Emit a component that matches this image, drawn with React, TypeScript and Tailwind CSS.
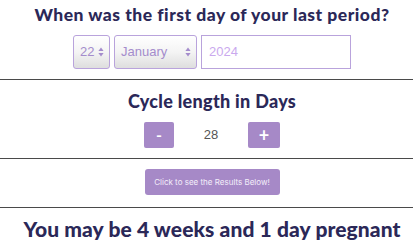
export default function App() {
  const heading = "font-['Lato',sans-serif] font-black text-[#2b2858] text-center";

  return (
    <div className="w-[413px] h-[240px] overflow-hidden bg-white">
      {/* last period */}
      <section className="h-[80px] border-b border-[#4a4a4a] flex flex-col items-center pl-[11px]">
        <h2 className={`${heading} text-[17.5px] leading-[22px] mt-[4px] tracking-[0.5px] whitespace-nowrap`}>
          When was the first day of your last period?
        </h2>
        <div className="flex gap-[4px] mt-[9px] font-['Liberation_Sans',sans-serif] text-[13px]">
          <div className="w-[37px] h-[34px] rounded-[3px] border border-[#b9a3dc] bg-gradient-to-b from-white via-[#f4f4f4] to-[#dedede] flex items-center justify-between pl-[6px] pr-[5px] text-[#a48ccc]">
            <span>22</span>
            <UpDown />
          </div>
          <div className="w-[83px] h-[34px] rounded-[3px] border border-[#b9a3dc] bg-gradient-to-b from-white via-[#f4f4f4] to-[#dedede] flex items-center justify-between pl-[6px] pr-[5px] text-[#a48ccc]">
            <span>January</span>
            <UpDown />
          </div>
          <div className="w-[150px] h-[34px] border border-[#b9a3dc] bg-white flex items-center pl-[7px] text-[#caa9ee]">
            2024
          </div>
        </div>
      </section>

      {/* cycle length */}
      <section className="h-[79px] border-b border-[#4a4a4a] flex flex-col items-center pl-[11px]">
        <h2 className={`${heading} text-[18px] leading-[22px] mt-[10px] tracking-[0.3px]`}>Cycle length in Days</h2>
        <div className="flex items-center mt-[10px]">
          <button className="w-[30px] h-[26px] rounded-[2px] bg-[#a689c7] text-white font-['Lato',sans-serif] font-bold text-[16px] leading-none">
            -
          </button>
          <span className="w-[74px] text-center text-[#555] font-['Liberation_Sans',sans-serif] text-[13px]">28</span>
          <button className="w-[32px] h-[26px] rounded-[2px] bg-[#a689c7] text-white font-['Lato',sans-serif] font-bold text-[18px] leading-none">
            +
          </button>
        </div>
      </section>

      {/* submit */}
      <section className="h-[49px] border-b border-[#4a4a4a] flex justify-center pt-[10px] pl-[11px]">
        <button className="w-[135px] h-[26px] rounded-[3px] bg-[#a689c7] text-[#f4eefa] font-['Inter',sans-serif] text-[8px]">
          Click to see the Results Below!
        </button>
      </section>

      {/* result */}
      <div className="pl-[11px]">
        <h1 className={`${heading} text-[21px] leading-[28px] mt-[7px] whitespace-nowrap tracking-[0.1px]`}>
          You may be 4 weeks and 1 day pregnant
        </h1>
      </div>
    </div>
  );
}

function UpDown() {
  return (
    <svg width="6" height="10" viewBox="0 0 6 10" className="shrink-0">
      <path d="M3 0.5 L5.6 4 H0.4 Z" fill="#a48ccc" />
      <path d="M3 9.5 L5.6 6 H0.4 Z" fill="#a48ccc" />
    </svg>
  );
}
